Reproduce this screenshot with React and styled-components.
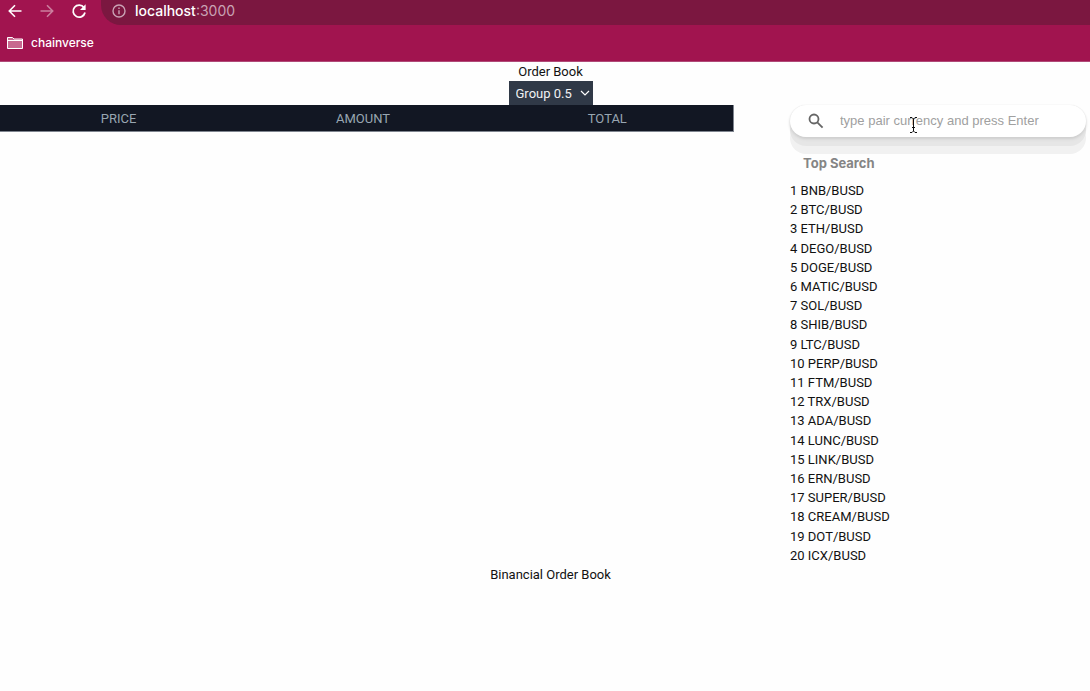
import React from "react";
import styled, { createGlobalStyle } from "styled-components";

const GlobalStyle = createGlobalStyle`
  * { box-sizing: border-box; }
  body {
    margin: 0;
    background: #fefefe;
    color: #111;
    font: 13px/19px Roboto, "Liberation Sans", sans-serif;
  }
`;

const Chrome = styled.header`
  height: 62px;
  background: #a1144f;
  border-bottom: 1px solid #b04a78;
  color: #fff;
  overflow: hidden;
`;

const Toolbar = styled.div`
  display: flex;
  align-items: flex-start;
  height: 31px;
  padding-left: 7px;
  gap: 16px;
`;

const NavButton = styled.button`
  display: flex;
  width: 16px;
  height: 22px;
  padding: 0;
  align-items: center;
  justify-content: center;
  border: 0;
  background: none;
  color: #fff;
  opacity: ${(p) => (p.disabled ? 0.45 : 1)};
`;

const AddressBar = styled.div`
  display: flex;
  flex: 1;
  align-items: center;
  gap: 9px;
  height: 25px;
  padding: 0 0 3px 11px;
  margin-left: -2px;
  border-radius: 0 0 0 20px;
  background: #7b1740;
  color: #c9a3b4;
  font: 14px/22px Inter, "Liberation Sans", sans-serif;
`;

const Host = styled.span`
  color: #fff;
  font-weight: 500;
`;

const Bookmarks = styled.nav`
  display: flex;
  padding: 2px 7px;
`;

const Bookmark = styled.a`
  display: flex;
  align-items: center;
  gap: 8px;
  color: #fff;
  font: 500 12px/19px Inter, "Liberation Sans", sans-serif;
  text-decoration: none;
`;

const Heading = styled.div`
  display: flex;
  flex-direction: column;
  align-items: center;
  padding-left: 11px;
`;

const Title = styled.h1`
  margin: 0;
  font: inherit;
`;

const GroupField = styled.div`
  display: grid;
  width: 84px;
  height: 24px;
  align-items: center;
  background: #303947;
  color: #fff;
  > * { grid-area: 1 / 1; }
  svg { justify-self: end; margin-right: 3px; pointer-events: none; }
`;

const GroupSelect = styled.select`
  width: 100%;
  height: 24px;
  padding: 0 7px;
  border: 0;
  border-radius: 0;
  background: transparent;
  color: #f0f1f3;
  font: inherit;
  appearance: none;
`;

const Main = styled.main`
  display: flex;
  align-items: flex-start;
  gap: 56px;
  padding-right: 4px;
`;

const BookArea = styled.section`
  flex: 1;
`;

const Book = styled.table`
  width: 100%;
  table-layout: fixed;
  border-spacing: 0;
  background: #121723;
  border: 0 solid #7f858f;
  border-width: 0 1px 1px 0;
`;

const HeadCell = styled.th`
  height: 26px;
  padding: 0 7px 0 0;
  color: #98a6b1;
  font-weight: 400;
  text-align: center;
`;

const Side = styled.aside`
  width: 296px;
`;

const SearchBox = styled.label`
  display: flex;
  align-items: center;
  height: 32px;
  padding: 0 18px;
  gap: 16px;
  border-radius: 16px;
  background: #fff;
  color: #666;
  box-shadow: 0 0 1px #ddd, 0 2px 3px #ccc, 0 9px 0 #e6e6e6, 0 17px 0 #f1f1f1;
  svg { flex: none; }
`;

const SearchInput = styled.input`
  flex: 1;
  min-width: 0;
  padding: 0;
  border: 0;
  outline: 0;
  background: transparent;
  font: 13px/18px "Liberation Sans", Arial, sans-serif;
  &::placeholder { color: #a0a0a0; opacity: 1; }
`;

const Pointer = styled.svg`
  position: absolute;
  left: 908px;
  top: 116px;
  pointer-events: none;
`;

const SideTitle = styled.h2`
  margin: 17px 0 8px 13px;
  color: #858585;
  font: 700 13px/19px Inter, "Liberation Sans", sans-serif;
`;

const PairList = styled.ul`
  display: grid;
  grid-auto-rows: 1fr;
  height: 384px;
  margin: 0;
  padding: 0;
  list-style: none;
`;

const Footer = styled.footer`
  padding-left: 11px;
  text-align: center;
`;

const pairs = [
  "BNB", "BTC", "ETH", "DEGO", "DOGE", "MATIC", "SOL", "SHIB", "LTC", "PERP",
  "FTM", "TRX", "ADA", "LUNC", "LINK", "ERN", "SUPER", "CREAM", "DOT", "ICX",
];

const line = { fill: "none", stroke: "currentColor" };

export default function App() {
  return (
    <>
      <GlobalStyle />
      <Chrome>
        <Toolbar>
          <NavButton aria-label="Back">
            <svg width="16" height="16" viewBox="0 0 16 16" {...line} strokeWidth="1.6">
              <path d="M14.5 8H2.5M8 2.3 2.3 8 8 13.7" />
            </svg>
          </NavButton>
          <NavButton aria-label="Forward" disabled>
            <svg width="16" height="16" viewBox="0 0 16 16" {...line} strokeWidth="1.6">
              <path d="M1.5 8H13.5M8 2.3 13.7 8 8 13.7" />
            </svg>
          </NavButton>
          <NavButton aria-label="Reload">
            <svg width="16" height="16" viewBox="0 0 16 16" {...line} strokeWidth="1.8">
              <path d="M13 4.6A6 6 0 1 0 14 9.5" />
              <path d="M14.6 1.3V7H9z" fill="currentColor" stroke="none" />
            </svg>
          </NavButton>
          <AddressBar>
            <svg width="14" height="14" viewBox="0 0 14 14" {...line} strokeWidth="1.4">
              <circle cx="7" cy="7" r="6" />
              <path d="M7 6.2V10.3M7 3.5V5" />
            </svg>
            <span><Host>localhost</Host>:3000</span>
          </AddressBar>
        </Toolbar>
        <Bookmarks>
          <Bookmark href="#">
            <svg width="16" height="14" viewBox="0 0 16 14" stroke="#fff">
              <path d="M.5 12.5V1.5H5.5L7 3H15.5V12.5z" fill="#c8688f" />
              <path d="M.5 4.5H15.5" />
            </svg>
            chainverse
          </Bookmark>
        </Bookmarks>
      </Chrome>
      <Heading>
        <Title>Order Book</Title>
        <GroupField>
          <GroupSelect aria-label="Group" defaultValue="0.5">
            <option value="0.5">Group 0.5</option>
            <option value="1">Group 1</option>
          </GroupSelect>
          <svg width="10" height="8" viewBox="0 0 10 8" {...line} strokeWidth="1.2">
            <path d="M1 2 5 6 9 2" />
          </svg>
        </GroupField>
      </Heading>
      <Main>
        <BookArea>
          <Book>
            <thead>
              <tr>
                <HeadCell>PRICE</HeadCell>
                <HeadCell>AMOUNT</HeadCell>
                <HeadCell>TOTAL</HeadCell>
              </tr>
            </thead>
          </Book>
        </BookArea>
        <Side>
          <SearchBox>
            <svg width="16" height="16" viewBox="0 0 16 16" {...line} strokeWidth="1.8">
              <circle cx="6" cy="6" r="4.5" />
              <path d="M9.3 9.3 14.6 14.6" />
            </svg>
            <SearchInput aria-label="Search pair" placeholder="type pair currency and press Enter" />
          </SearchBox>
          <SideTitle>Top Search</SideTitle>
          <PairList>
            {pairs.map((p, i) => (
              <li key={p}>{`${i + 1} ${p}/BUSD`}</li>
            ))}
          </PairList>
        </Side>
      </Main>
      <Footer>Binancial Order Book</Footer>
      <Pointer width="10" height="18" viewBox="0 0 10 18" stroke="#111" fill="none">
        <path d="M2 1.5H4L5.5 3 7 1.5H9M5.5 3V15M2 16.5H4L5.5 15 7 16.5H9M4 11.5H7" />
      </Pointer>
    </>
  );
}
